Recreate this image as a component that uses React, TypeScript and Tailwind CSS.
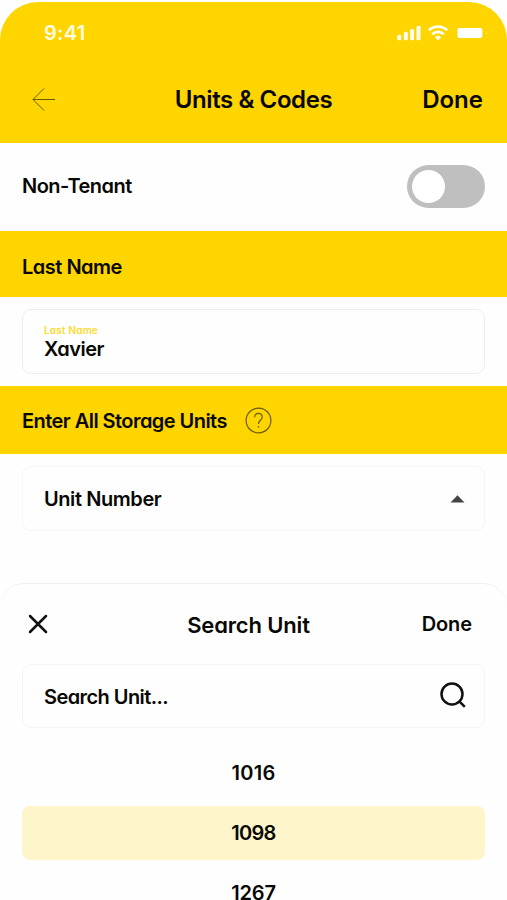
import React from "react";

const units = [
  { id: "1016", selected: false, tracking: "tracking-[0.3px]" },
  { id: "1098", selected: true, tracking: "tracking-[-0.7px]" },
  { id: "1267", selected: false, tracking: "tracking-[-0.2px]" },
];

function SignalIcon() {
  return (
    <svg width="24" height="16" viewBox="0 0 24 16" fill="#fffef0">
      <rect x="0.3" y="9.7" width="4" height="5.6" rx="1.5" />
      <rect x="6.8" y="7" width="4" height="8.3" rx="1.4" />
      <rect x="13.1" y="4" width="4" height="11.3" rx="1.4" />
      <rect x="19.5" y="1" width="4" height="14.3" rx="1.4" />
    </svg>
  );
}

function WifiIcon() {
  return (
    <svg width="20" height="16" viewBox="0 0 20 16" fill="none" stroke="#fffef0" strokeWidth="2.8">
      <path d="M0.9 5.3a13 13 0 0 1 18.2 0" />
      <path d="M4.2 9.3a8.3 8.3 0 0 1 11.6 0" />
      <path d="M6.9 12.3a4.5 4.5 0 0 1 6.2 0L10 15.5z" fill="#fffef0" stroke="none" />
    </svg>
  );
}

function BatteryIcon() {
  return (
    <svg width="32" height="12" viewBox="0 0 32 12">
      <rect x="0.4" y="0.9" width="25" height="10.2" rx="2" fill="#fff" />
      <path d="M29.4 4.3v3.4c1.4-.5 1.4-2.9 0-3.4z" fill="#ffe566" />
    </svg>
  );
}

function SectionBar({ children, className }: { children: React.ReactNode; className: string }) {
  return <div className={`flex items-center bg-[#ffd500] px-[22px] ${className}`}>{children}</div>;
}

export default function App() {
  return (
    <div className="flex h-[900px] w-[507px] flex-col overflow-hidden bg-[#fefefe] pt-[2px] font-['Inter','Liberation_Sans',sans-serif] text-[20px] font-semibold leading-6 tracking-[-0.5px] text-[#080804] [font-feature-settings:'cv11']">
      <header className="h-[141px] shrink-0 rounded-t-[38px] bg-[#ffd500]">
        <div className="flex h-[62px] items-center justify-between pl-11 pr-[18px]">
          <span className="tracking-[0.3px] text-[#fffce0]">9:41</span>
          <div className="flex items-center">
            <SignalIcon />
            <span className="ml-[7px] flex"><WifiIcon /></span>
            <span className="ml-[9px] flex"><BatteryIcon /></span>
          </div>
        </div>
        <div className="grid h-[70px] grid-cols-[1fr_auto_1fr] items-center pl-6 pr-6 text-[24px] tracking-[-0.4px]">
          <svg className="ml-2" width="24" height="24" viewBox="0 0 24 24" fill="none" stroke="#6b5a00" strokeWidth="1">
            <path d="M23 12.5H1M12 1.5l-11 11 11 11" />
          </svg>
          <span className="pt-px">Units &amp; Codes</span>
          <span className="pt-px text-right tracking-normal">Done</span>
        </div>
      </header>

      <div className="flex h-[88px] shrink-0 items-center justify-between px-[22px] pb-[2px]">
        <span>Non-Tenant</span>
        <div className="flex h-[43px] w-[78px] items-center rounded-full bg-[#bfbfbf] pl-[5px]">
          <div className="size-[33px] rounded-full bg-white" />
        </div>
      </div>

      <SectionBar className="h-[66px] shrink-0 pt-[5px]">Last Name</SectionBar>
      <div className="h-[89px] shrink-0 px-[22px] pt-3">
        <div className="flex h-[65px] flex-col rounded-[9px] border border-[#eeeeee] pl-[21px] pt-[14px]">
          <span className="text-[10px] leading-[13px] tracking-[0.2px] text-[#ffda2b]">Last Name</span>
          <span className="leading-6">Xavier</span>
        </div>
      </div>

      <SectionBar className="h-[68px] shrink-0">
        <span className="w-[205px] whitespace-nowrap pt-px tracking-[-0.55px]">Enter All Storage Units</span>
        <svg className="ml-[18px]" width="27" height="27" viewBox="0 0 27 27" fill="none" stroke="#6b5a00" strokeWidth="1.2">
          <circle cx="13.5" cy="13.5" r="12.4" />
          <path d="M9.7 10.2c0-5.1 7.5-5 7.5-.3 0 3.6-3.7 3.2-3.7 7" />
          <path d="M13.5 19v1.6" />
        </svg>
      </SectionBar>
      <div className="h-[129px] shrink-0 px-[22px] pt-3">
        <div className="flex h-[65px] items-center justify-between rounded-[9px] border border-[#f6f6f6] pl-[21px] pr-[19px]">
          <span className="tracking-[-0.42px]">Unit Number</span>
          <svg width="15" height="8" viewBox="0 0 15 8" fill="#444">
            <path d="M.5 7.5 7.5.3l7 7.2z" />
          </svg>
        </div>
      </div>

      <section className="flex h-[317px] shrink-0 flex-col overflow-hidden rounded-t-[24px] border-t border-[#f0f0f0] px-[22px]">
        <div className="grid h-[80px] shrink-0 grid-cols-[1fr_auto_1fr] items-center pl-[5px] pr-[13px]">
          <svg className="ml-px" width="20" height="20" viewBox="0 0 20 20" fill="none" stroke="#111" strokeWidth="2.5" strokeLinecap="round">
            <path d="m2 2 16 16M18 2 2 18" />
          </svg>
          <span className="pr-[2px] pt-[2px] text-[22px] tracking-[-0.15px]">Search Unit</span>
          <span className="text-right tracking-[-0.1px]">Done</span>
        </div>
        <div className="flex h-[64px] shrink-0 items-center justify-between rounded-[9px] border border-[#f4f4f4] pl-[21px] pr-[18px]">
          <span className="pt-[2px] tracking-[-0.57px]">Search Unit...</span>
          <svg className="mb-[2px]" width="26" height="26" viewBox="0 0 26 26" fill="none" stroke="#111" strokeWidth="2.5">
            <circle cx="12" cy="12" r="10.5" />
            <path d="m19.3 19.3 5.5 5.5" />
          </svg>
        </div>
        <ul className="flex shrink-0 flex-col gap-[6px] pt-[18px]">
          {units.map((unit) => (
            <li
              key={unit.id}
              className={`flex h-[54px] items-center justify-center rounded-[8px] ${unit.tracking} ${unit.selected ? "bg-[#fef5cb]" : ""}`}
            >
              {unit.id}
            </li>
          ))}
        </ul>
      </section>
    </div>
  );
}
